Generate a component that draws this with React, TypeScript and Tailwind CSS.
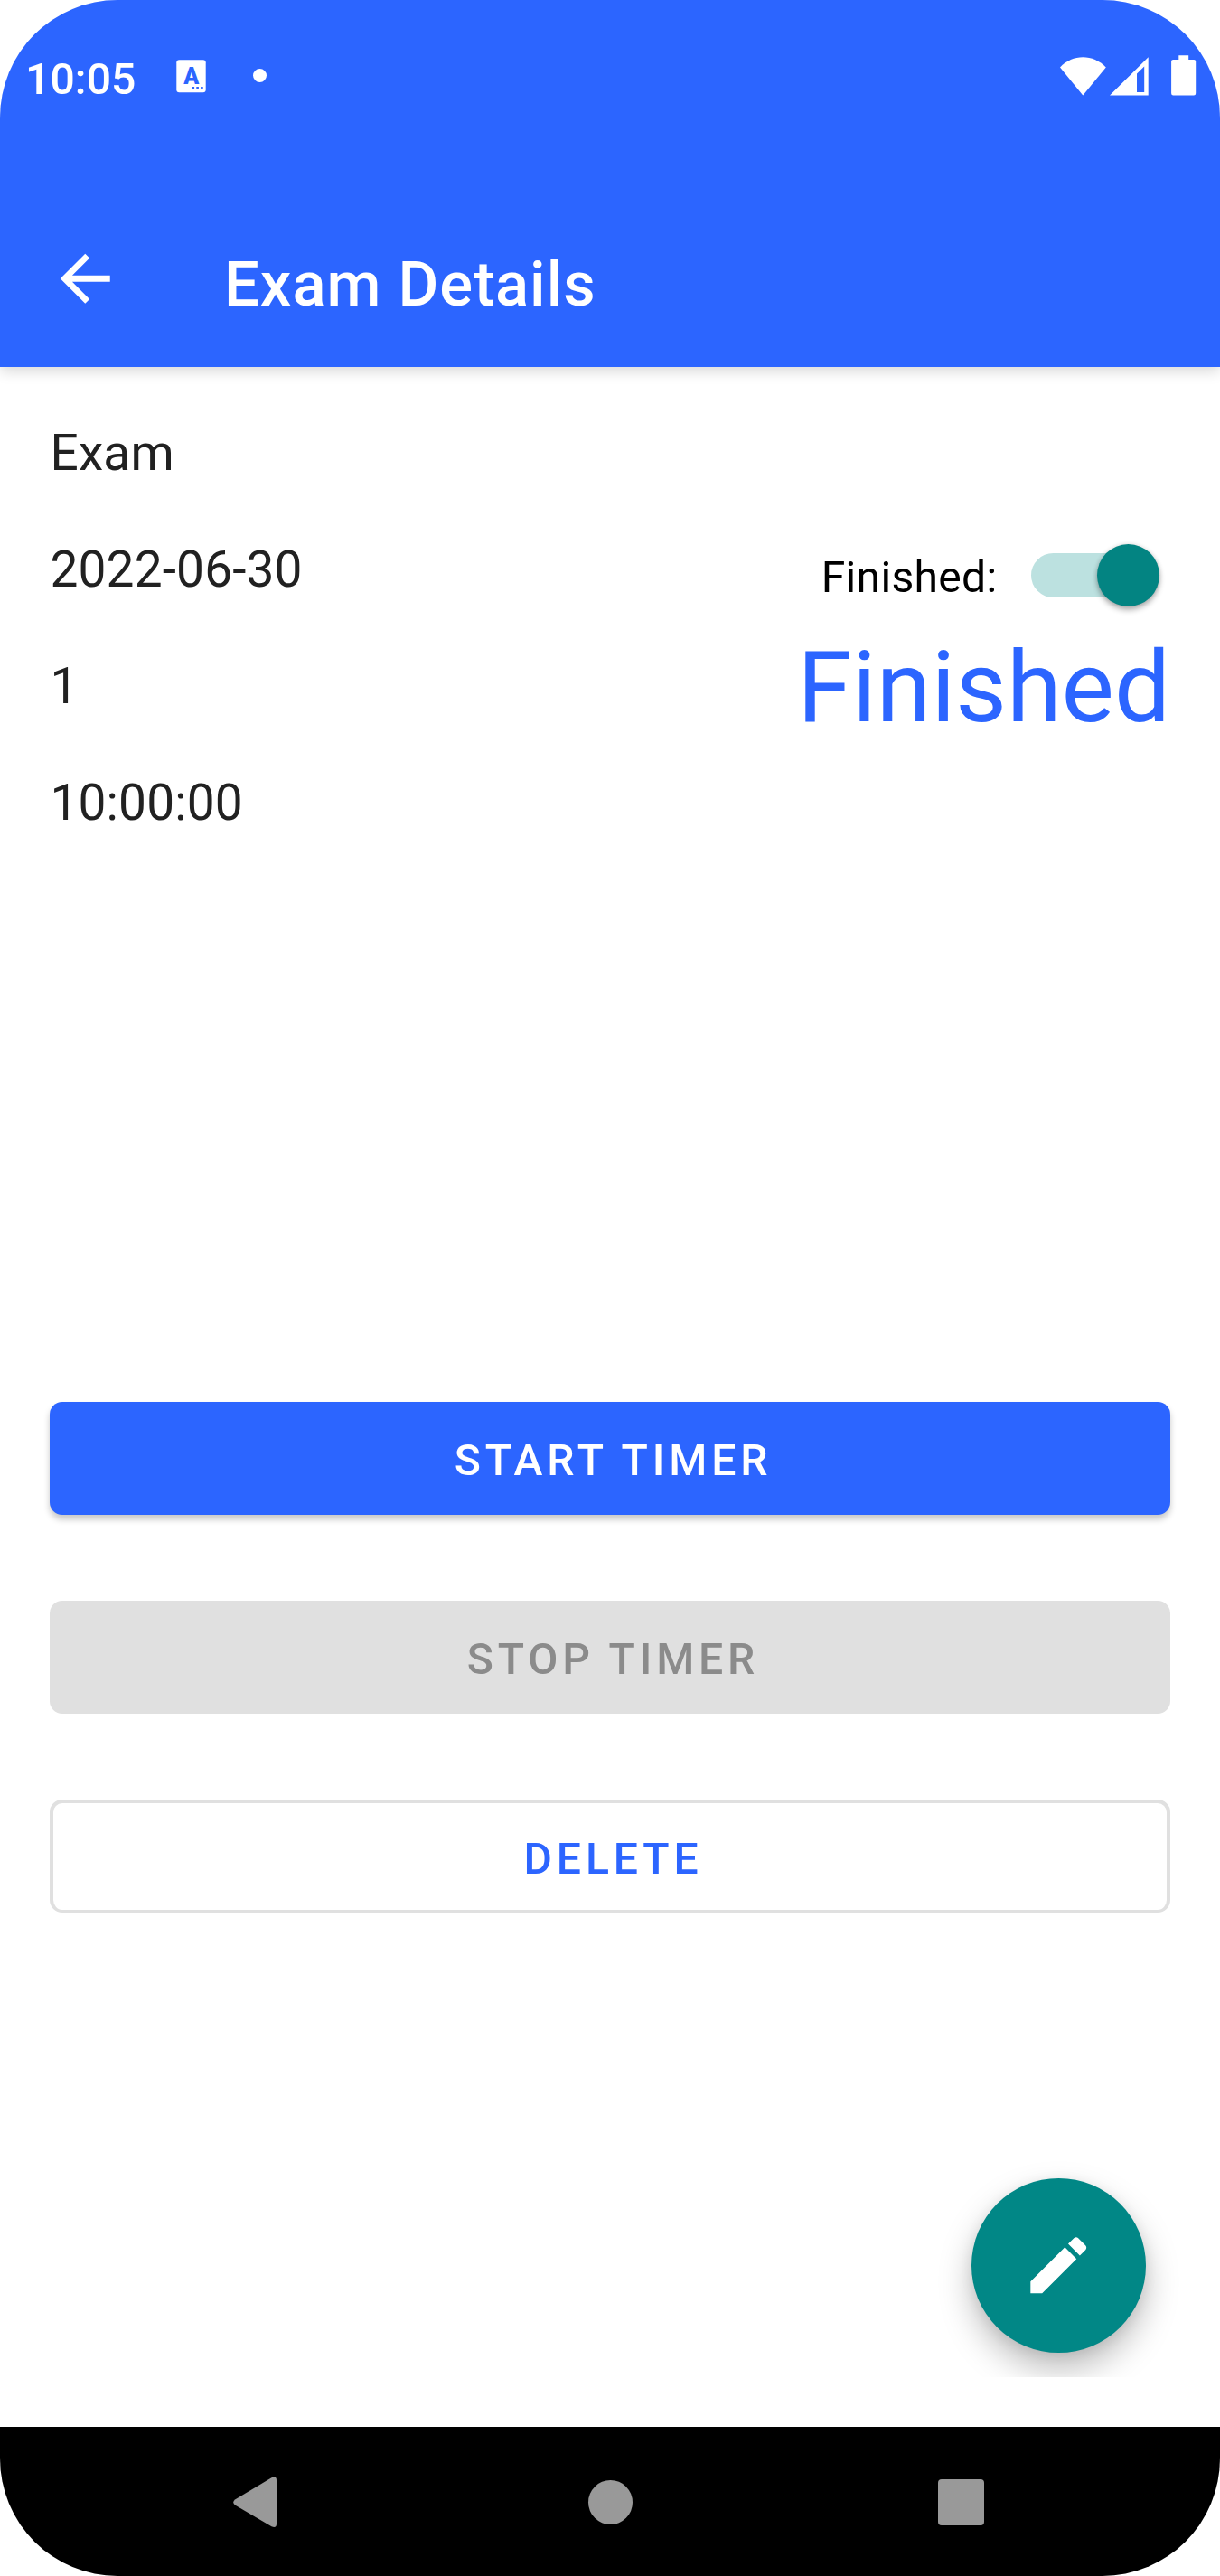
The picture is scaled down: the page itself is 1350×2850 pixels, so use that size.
import React from "react";

function StatusBar() {
  return (
    <div className="flex h-[140px] items-start justify-between pt-[60px] pr-[26px] pl-[28px]">
      <div className="flex items-start">
        <span className="mt-[4px] w-[167px] text-[48.1px] leading-[48px] font-medium tracking-[0.1px] whitespace-nowrap">10:05</span>
        <svg className="mt-[6px] h-[37px] w-[33px]" viewBox="0 0 33 37">
          <rect x="0.3" y="0.3" width="32.4" height="36" rx="3" fill="#fff" />
          <text x="16.7" y="27" textAnchor="middle" fontFamily="Roboto, sans-serif" fontSize="25" fontWeight="900" fill="#2c65ff">A</text>
          <path d="M17.5 30h2.6v3h-2.6zM22.3 30h2.6v3h-2.6zM27.1 30h2.6v3h-2.6z" fill="#2c65ff" />
        </svg>
        <span className="mt-[16px] ml-[52px] size-[15px] rounded-full bg-white" />
      </div>
      <div className="flex items-start">
        <svg className="mt-[3px] h-[43px] w-[51px]" viewBox="0 0 51 43" fill="#fff">
          <path d="M25.3 42.5L0 11.4C7 4 16 0.2 25.3 0.2S43.600 4 50.800 11.400Z" />
        </svg>
        <svg className="mt-[3px] ml-[4px] h-[43px] w-[43px]" viewBox="0 0 43 43" fill="#fff">
          <path fillRule="evenodd" d="M0 42.500L42.700 0.200V42.500ZM30 18.500V39H38.200V10.500Z" />
        </svg>
        <svg className="mt-[1px] ml-[25px] h-[45px] w-[28px]" viewBox="0 0 28 45" fill="#fff">
          <path d="M8.300 0.300H19.200V5H25.200A2 2 0 0 1 27.200 7V42.300A2.200 2.200 0 0 1 25 44.500H2.300A2.200 2.200 0 0 1 0.100 42.300V7A2 2 0 0 1 2.100 5H8.300Z" />
        </svg>
      </div>
    </div>
  );
}

function Toolbar() {
  return (
    <div className="flex h-[266px] items-start pt-[127px] pl-[52.5px]">
      <svg className="size-[82.5px] shrink-0" viewBox="0 0 24 24" fill="#fff">
        <path d="M20 11H7.830l5.590-5.590L12 4l-8 8 8 8 1.410-1.410L7.830 13H20v-2z" />
      </svg>
      <h1 className="mt-[8px] ml-[113px] text-[68.75px] leading-[80px] font-medium tracking-[1px] whitespace-nowrap">Exam Details</h1>
    </div>
  );
}

function FinishedSwitch() {
  return (
    <div className="flex h-[75px] items-center justify-end pr-[21px]">
      <span className="mt-[4px] mr-[37.5px] text-[48.1px] leading-[60px] tracking-[0.3px] text-black">Finished:</span>
      <button className="relative mt-[-1px] h-[49px] w-[133px] rounded-full bg-[#bce1e0]" aria-label="Finished">
        <span className="absolute top-[-9.5px] right-[-9px] size-[69px] rounded-full bg-[#038482] shadow-[0_4px_6px_rgba(0,0,0,0.3),0_0_5px_rgba(0,0,0,0.12)]" />
      </button>
    </div>
  );
}

const details = ["Exam", "2022-06-30", "1", "10:00:00"];
const buttonBase =
  "flex h-[125px] w-full items-center justify-center rounded-[14px] pt-[5px] pl-[7px] text-[48.125px] leading-[56px] font-medium tracking-[4.85px]";

export default function App() {
  return (
    <div className="h-[2850px] w-[1350px] bg-white font-[Roboto,sans-serif]">
      <div className="flex h-full flex-col overflow-hidden rounded-[130px] bg-white">
        <header className="relative h-[406px] shrink-0 bg-[#2c65ff] text-white shadow-[0_5px_14px_rgba(0,0,0,0.15)]">
          <StatusBar />
          <Toolbar />
        </header>
        <main className="flex flex-1 flex-col px-[55px]">
          <div className="flex h-[1145px] justify-between pt-[31px]">
            <div className="pl-[0.5px]">
              {details.map((d) => (
                <p key={d} className="h-[129px] text-[55px] leading-[129px] tracking-[0.15px] text-[#212121]">{d}</p>
              ))}
            </div>
            <div className="pt-[162px]">
              <FinishedSwitch />
              <p className="mt-[22px] text-right text-[110px] leading-[130px] text-[#2c65ff]">Finished</p>
            </div>
          </div>
          <div className="flex flex-col gap-[95px]">
            <button className={`${buttonBase} bg-[#2c65ff] text-white shadow-[0_5px_7px_rgba(0,0,0,0.22)]`}>START TIMER</button>
            <button className={`${buttonBase} bg-[#e0e0e0] text-[#8b8b8b]`}>STOP TIMER</button>
            <button className={`${buttonBase} border-[3px] border-x-[4px] border-t-[4px] border-[#e0e0e0] text-[#2c65ff]`}>DELETE</button>
          </div>
          <div className="-mx-[55px] mt-[234px] flex h-[280px] justify-end overflow-hidden pt-[60px] pr-[82px]">
            <button className="flex size-[193px] items-center justify-center rounded-full bg-[#018786] shadow-[0_18px_36px_rgba(0,0,0,0.26),0_3px_14px_rgba(0,0,0,0.08)]" aria-label="Edit">
              <svg className="size-[82.5px]" viewBox="0 0 24 24" fill="#fff">
                <path d="M3 17.250V21h3.750L17.810 9.940l-3.750-3.750L3 17.250zM20.710 7.040c.39-.39.39-1.020 0-1.410l-2.340-2.340c-.39-.39-1.020-.39-1.410 0l-1.830 1.830 3.750 3.750 1.830-1.830z" />
              </svg>
            </button>
          </div>
        </main>
        <nav className="flex h-[165px] shrink-0 items-center bg-black pt-[2px] pl-[258px]">
          <svg className="h-[57px] w-[48px]" viewBox="0 0 48 57" fill="#999">
            <path d="M42.500 1.200Q48 -1 48 4V52.500Q48 57.500 42.500 55.200L2 31.500Q-1.500 28.500 2 25.500Z" />
          </svg>
          <span className="ml-[345px] size-[49px] rounded-full bg-[#999]" />
          <span className="ml-[338px] size-[51px] rounded-[4px] bg-[#999]" />
        </nav>
      </div>
    </div>
  );
}
